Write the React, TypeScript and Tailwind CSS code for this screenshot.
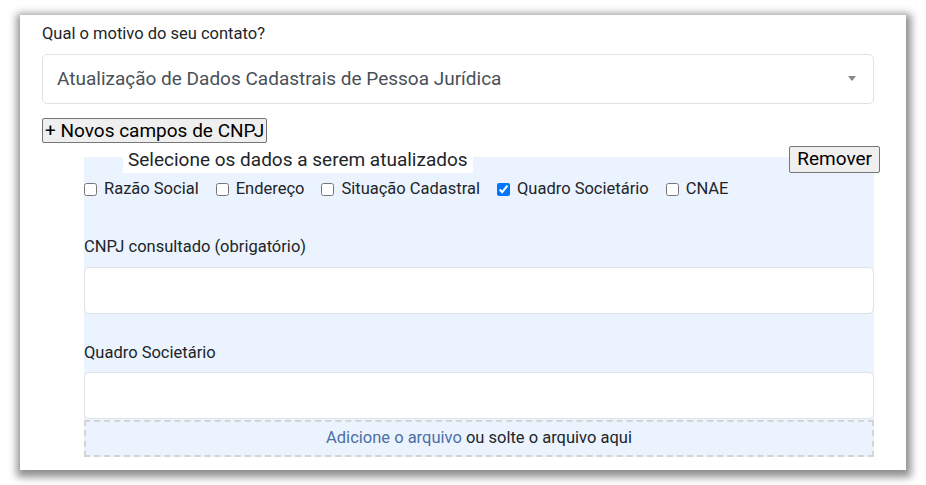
import React from 'react';

const opcoes = [
  { label: 'Razão Social', checked: false },
  { label: 'Endereço', checked: false },
  { label: 'Situação Cadastral', checked: false },
  { label: 'Quadro Societário', checked: true },
  { label: 'CNAE', checked: false },
];

export default function App() {
  return (
    <div className="min-h-screen bg-white pt-[15px] pl-[20px] font-['Roboto',sans-serif] text-[#212529]">
      <div className="w-[886px] h-[455px] bg-white shadow-[1px_3px_8px_4px_rgba(0,0,0,0.45)] pl-[22px] pr-[32px] overflow-hidden">
        <p className="pt-[10px] text-[16.5px] leading-[18px]">Qual o motivo do seu contato?</p>

        <div className="mt-[11px] h-[50px] border border-[#dee2e6] rounded-[5px] flex items-center justify-between pl-[14px] pr-[17px]">
          <span className="text-[19px] text-[#495057]">Atualização de Dados Cadastrais de Pessoa Jurídica</span>
          <svg width="8" height="5" viewBox="0 0 8 5" className="-mt-[2px]">
            <path d="M0 0h8L4 5z" fill="#888" />
          </svg>
        </div>

        <button className="mt-[14px] h-[25px] px-[2px] bg-[#efefef] border border-[#767676] rounded-[2px] text-[19px] leading-[22px] text-black">
          + Novos campos de CNPJ
        </button>

        {/* bloco de campos do CNPJ */}
        <div className="flow-root ml-[42px] mt-[13px] bg-[#ebf3fe]">
          <div className="flex justify-between items-start -mt-[11px]">
            <span className="ml-[39px] bg-white px-[5px] h-[27px] text-[19px] leading-[27px]">
              Selecione os dados a serem atualizados
            </span>
            <button className="-mr-[6px] h-[27px] px-[7px] bg-[#efefef] border border-[#767676] rounded-[2px] text-[19px] leading-[22px] text-black">
              Remover
            </button>
          </div>

          <div className="flex items-center h-[20px] mt-[7px]">
            {opcoes.map((o) => (
              <label key={o.label} className="flex items-center mr-[17px] text-[16.5px]">
                <input
                  type="checkbox"
                  defaultChecked={o.checked}
                  className="w-[13px] h-[13px] accent-[#0075ff] mr-[7px]"
                />
                {o.label}
              </label>
            ))}
          </div>

          <p className="mt-[38px] text-[16.5px] leading-[18px]">CNPJ consultado (obrigatório)</p>
          <div className="mt-[11px] h-[47px] bg-white border border-[#dee2e6] rounded-[5px]" />

          <p className="mt-[30px] text-[16.5px] leading-[18px]">Quadro Societário</p>
          <div className="mt-[10px] h-[47px] bg-white border border-[#dee2e6] rounded-[5px]" />

          <div className="mt-[1px] h-[37px] border-2 border-dashed border-[#d4d4d4] flex items-center justify-center text-[16.5px]">
            <span className="text-[#4d6fa3]">Adicione o arquivo</span>
            <span>&nbsp;ou solte o arquivo aqui</span>
          </div>
        </div>
      </div>
    </div>
  );
}
